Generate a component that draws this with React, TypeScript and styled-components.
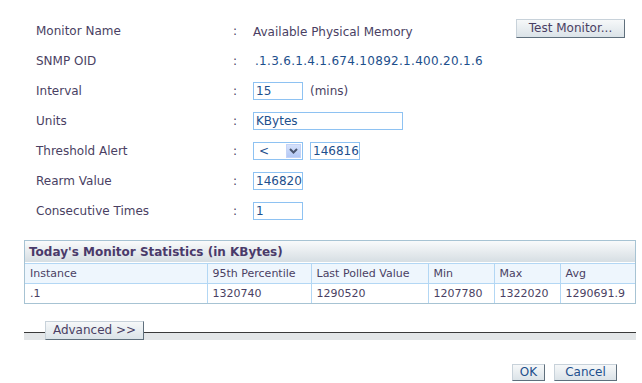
import React from "react";
import styled, { createGlobalStyle } from "styled-components";

const Global = createGlobalStyle`
  html, body { margin: 0; padding: 0; background: #ffffff; }
  body { font-family: "DejaVu Sans", Verdana, sans-serif; font-size: 12px; color: #4a3f63; }
`;

const Page = styled.div`
  width: 642px;
  height: 383px;
  padding-top: 16px;
  box-sizing: border-box;
  overflow: hidden;
`;

const Form = styled.div`
  display: grid;
  grid-template-columns: 197px 20px 1fr;
  grid-auto-rows: 30px;
  padding-left: 36px;
  padding-right: 17px;
`;

const Label = styled.div`
  display: flex;
  align-items: center;
  font-size: 12px;
  color: #4a3f63;
`;

const Colon = styled(Label)``;

const Value = styled.div<{ $blue?: boolean }>`
  display: flex;
  align-items: center;
  gap: 7px;
  color: ${(p) => (p.$blue ? "#1d4f8c" : "#4a3f63")};
`;

const Text = styled.span<{ $wide?: boolean }>`
  font-size: 12px;
  ${(p) => (p.$wide ? "letter-spacing: 0.3px; margin-left: 2px;" : "")}
`;

const Input = styled.input<{ $w: number }>`
  width: ${(p) => p.$w}px;
  height: 18px;
  box-sizing: border-box;
  border: 1px solid #8ec2f2;
  padding: 0 0 0 2px;
  margin: 0;
  font-family: "DejaVu Sans", Verdana, sans-serif;
  font-size: 12px;
  color: #1d4f8c;
  background: #fff;
  outline: none;
`;

const Select = styled.div`
  width: 50px;
  height: 18px;
  box-sizing: border-box;
  border: 1px solid #8ec2f2;
  display: flex;
  align-items: center;
  justify-content: space-between;
  padding: 0 1px 0 5px;
  color: #1d4f8c;
  font-size: 12px;
`;

const Arrow = styled.span`
  width: 15px;
  height: 14px;
  box-sizing: border-box;
  background: linear-gradient(#d5e1fb, #b3c8f5);
  border: 1px solid #c4d3f6;
  display: flex;
  align-items: center;
  justify-content: center;
`;

const Btn = styled.button<{ $blue?: boolean }>`
  height: 19px;
  box-sizing: border-box;
  padding: 0 8px;
  margin: 0;
  font-family: "DejaVu Sans", Verdana, sans-serif;
  font-size: 12px;
  line-height: 15px;
  color: ${(p) => (p.$blue ? "#1d4f8c" : "#4a3f63")};
  background: linear-gradient(#f6f8f9, #dbe3e8);
  border: 1px solid;
  border-color: #c8d2da #5f6f7c #5f6f7c #c8d2da;
  cursor: pointer;
`;

const FirstValue = styled(Value)`
  justify-content: space-between;
  align-items: flex-start;
  padding-top: 6px;
`;

const FirstText = styled.span`
  margin-top: 3px;
`;

const TestBtn = styled(Btn)`
  width: 109px;
  margin-top: -3px;
  padding: 0;
`;

const TableWrap = styled.div`
  margin: 14px 6px 0 24px;
  border: 1px solid #a7c3d3;
  width: 612px;
  box-sizing: border-box;
`;

const TitleBar = styled.div`
  height: 21px;
  background: linear-gradient(#f9fafb, #d6dee3);
  border-bottom: 1px solid #ffffff;
  display: flex;
  align-items: center;
  padding-left: 4px;
  font-weight: bold;
  font-size: 12px;
  color: #4a3a6a;
`;

const Table = styled.table`
  border-collapse: collapse;
  width: 610px;
  table-layout: fixed;
  font-size: 11px;
`;

const Th = styled.td`
  height: 19px;
  padding: 0 0 0 5px;
  border: 1px solid #b3d7f4;
  background: #eef6fd;
  color: #4a3f63;
  font-size: 11px;
  white-space: nowrap;
  overflow: hidden;
  &:first-child { border-left: none; }
  &:last-child { border-right: none; }
`;

const Td = styled.td`
  height: 19px;
  padding: 0 0 0 5px;
  border: 1px solid #b3d7f4;
  border-bottom: none;
  color: #4a3f63;
  font-size: 11px;
  white-space: nowrap;
  overflow: hidden;
  &:first-child { border-left: none; }
  &:last-child { border-right: none; }
`;

const AdvancedRow = styled.div`
  position: relative;
  display: flow-root;
  margin: 17px 6px 0 24px;
  height: 19px;
`;

const Rule = styled.div`
  margin-top: 11px;
  border-top: 1px solid #3a3a3a;
  height: 7px;
  background: #e3e6e8;
`;

const AdvBtn = styled(Btn)`
  position: absolute;
  left: 21px;
  top: 0;
  width: 99px;
  height: 19px;
  padding: 0;
`;

const Footer = styled.div`
  display: flex;
  justify-content: flex-end;
  gap: 9px;
  margin-top: 24px;
  padding-right: 25px;
`;

const OkBtn = styled(Btn)<{ $w: number }>`
  width: ${(p) => p.$w}px;
  height: 17px;
  line-height: 13px;
  padding: 0;
`;

const cols = [182, 104, 117, 66, 66, 75];

export default function App() {
  return (
    <Page>
      <Global />
      <Form>
        <Label>Monitor Name</Label>
        <Colon>:</Colon>
        <FirstValue>
          <FirstText>Available Physical Memory</FirstText>
          <TestBtn>Test Monitor...</TestBtn>
        </FirstValue>

        <Label>SNMP OID</Label>
        <Colon>:</Colon>
        <Value $blue>
          <Text $wide>.1.3.6.1.4.1.674.10892.1.400.20.1.6</Text>
        </Value>

        <Label>Interval</Label>
        <Colon>:</Colon>
        <Value>
          <Input $w={50} defaultValue="15" />
          <Text>(mins)</Text>
        </Value>

        <Label>Units</Label>
        <Colon>:</Colon>
        <Value>
          <Input $w={150} defaultValue="KBytes" />
        </Value>

        <Label>Threshold Alert</Label>
        <Colon>:</Colon>
        <Value>
          <Select>
            <span>&lt;</span>
            <Arrow>
              <svg width="9" height="6" viewBox="0 0 9 6">
                <path d="M1 1 L4.5 4.5 L8 1" stroke="#4a5670" strokeWidth="2" fill="none" />
              </svg>
            </Arrow>
          </Select>
          <Input $w={50} defaultValue="146816" />
        </Value>

        <Label>Rearm Value</Label>
        <Colon>:</Colon>
        <Value>
          <Input $w={50} defaultValue="146820" />
        </Value>

        <Label>Consecutive Times</Label>
        <Colon>:</Colon>
        <Value>
          <Input $w={50} defaultValue="1" />
        </Value>
      </Form>

      <TableWrap>
        <TitleBar>Today's Monitor Statistics (in KBytes)</TitleBar>
        <Table>
          <colgroup>
            {cols.map((w, i) => (
              <col key={i} style={{ width: w }} />
            ))}
          </colgroup>
          <tbody>
            <tr>
              {["Instance", "95th Percentile", "Last Polled Value", "Min", "Max", "Avg"].map((h) => (
                <Th key={h}>{h}</Th>
              ))}
            </tr>
            <tr>
              {[".1", "1320740", "1290520", "1207780", "1322020", "1290691.9"].map((v, i) => (
                <Td key={i}>{v}</Td>
              ))}
            </tr>
          </tbody>
        </Table>
      </TableWrap>

      <AdvancedRow>
        <Rule />
        <AdvBtn>Advanced &gt;&gt;</AdvBtn>
      </AdvancedRow>

      <Footer>
        <OkBtn $blue $w={33}>OK</OkBtn>
        <OkBtn $blue $w={63}>Cancel</OkBtn>
      </Footer>
    </Page>
  );
}
